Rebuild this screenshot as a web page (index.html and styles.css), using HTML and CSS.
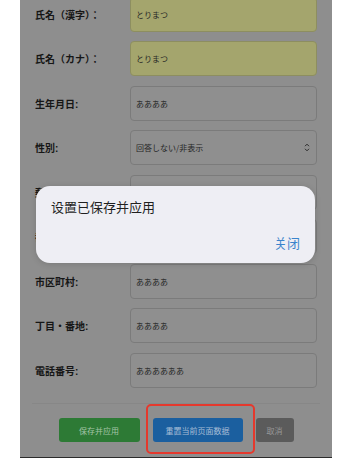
FILE: index.html
```html
<!DOCTYPE html>
<html lang="ja">
<head>
    <title>会員情報</title>
    <meta charset="utf-8">
    <meta name="viewport" content="width=device-width, initial-scale=1">
    <link rel="stylesheet" href="styles.css">
</head>
<body>
    <div class="panel">
        <form class="form">
            <div class="row">
                <label>氏名（漢字）：</label>
                <input class="autofill" type="text" value="とりまつ">
            </div>
            <div class="row">
                <label>氏名（カナ）：</label>
                <input class="autofill" type="text" value="とりまつ">
            </div>
            <div class="row">
                <label>生年月日:</label>
                <input type="text" value="ああああ">
            </div>
            <div class="row">
                <label>性別:</label>
                <div class="select">
                    <span>回答しない/非表示</span>
                    <svg width="6" height="9" viewBox="0 0 6 9">
                        <path d="M1 3.2 L3 1.2 L5 3.2 M1 5.8 L3 7.8 L5 5.8" fill="none" stroke="#2a2a2a" stroke-width="1"/>
                    </svg>
                </div>
            </div>
            <div class="row">
                <label>郵便番号:</label>
                <input type="text" value="1234567">
            </div>
            <div class="row">
                <label>都道府県:</label>
                <input type="text" value="ああああ">
            </div>
            <div class="row">
                <label>市区町村:</label>
                <input type="text" value="ああああ">
            </div>
            <div class="row">
                <label>丁目・番地:</label>
                <input type="text" value="ああああ">
            </div>
            <div class="row">
                <label>電話番号:</label>
                <input type="text" value="ああああああ">
            </div>
        </form>

        <div class="actions">
            <button class="btn save-button">保存并应用</button>
            <div class="mark">
                <button class="btn reset-button">重置当前页面数据</button>
            </div>
            <button class="btn cancel-button">取消</button>
        </div>
    </div>

    <div class="dialog">
        <p class="dialog-title">设置已保存并应用</p>
        <div class="dialog-foot">
            <button class="dialog-close">关闭</button>
        </div>
    </div>
</body>
</html>
```

FILE: styles.css
```css
* {
    box-sizing: border-box;
}

body {
    margin: 0;
    background-color: white;
    font-family: "Liberation Sans", "Noto Sans CJK JP", sans-serif;
    height: 458px;
    overflow: hidden;
    position: relative;
}

.panel {
    width: 312px;
    margin: -3.5px 0 0 20px;
    background-color: #8e8e8e;
    border-bottom: 2px solid #2b2b2b;
}

.form {
    padding: 0 15px;
}

.row {
    display: flex;
    align-items: center;
    height: 35px;
    margin-bottom: 9.5px;
}

.row:last-child {
    margin-bottom: 0;
}

.row label {
    width: 95px;
    flex-shrink: 0;
    font-size: 10px;
    font-weight: bold;
    color: #161616;
}

.row input,
.select {
    flex: 1;
    height: 35px;
    padding: 0 5px;
    border: 1px solid #7b7b7b;
    border-radius: 4px;
    background-color: #8f8f8f;
    font-family: "Noto Sans CJK JP", sans-serif;
    font-size: 8px;
    color: #262626;
    outline: none;
}

.row input.autofill {
    background-color: #a4a56d;
    border-color: #8d8e60;
}

.select {
    display: flex;
    align-items: center;
    justify-content: space-between;
    padding-right: 6px;
}

.actions {
    display: flex;
    justify-content: center;
    gap: 13px;
    margin: 15.5px 12px 0;
    padding: 14px 0 15px;
    border-top: 1px solid #878787;
}

.btn {
    height: 24px;
    border: none;
    border-radius: 3px;
    font-family: "Noto Sans CJK SC", sans-serif;
    font-size: 8px;
    padding: 0;
}

.save-button {
    width: 81px;
    background-color: #2d7a35;
    color: #a3c4a6;
}

.reset-button {
    width: 90px;
    background-color: #1b5f9f;
    color: #a6bcd6;
}

.cancel-button {
    width: 38px;
    background-color: #5b5b5b;
    color: #979797;
}

.mark {
    position: relative;
}

.mark::after {
    content: "";
    position: absolute;
    left: -7px;
    right: -12px;
    top: -14px;
    bottom: -12px;
    border: 2.5px solid #e5392d;
    border-radius: 5px;
}

.dialog {
    position: absolute;
    left: 36px;
    top: 186px;
    width: 279px;
    height: 77px;
    padding: 0 15px;
    background-color: #eeeef4;
    border-radius: 14px;
    box-shadow: 0 1px 6px rgba(0, 0, 0, 0.15);
    font-family: "Noto Sans CJK SC", sans-serif;
}

.dialog-title {
    margin: 0;
    padding-top: 12px;
    font-size: 13px;
    line-height: 18px;
    color: #1f1f1f;
}

.dialog-foot {
    display: flex;
    justify-content: flex-end;
    margin-top: 18px;
}

.dialog-close {
    border: none;
    background: none;
    padding: 0;
    font-family: "Noto Sans CJK SC", sans-serif;
    font-size: 13px;
    line-height: 18px;
    color: #3a84cc;
}
```
